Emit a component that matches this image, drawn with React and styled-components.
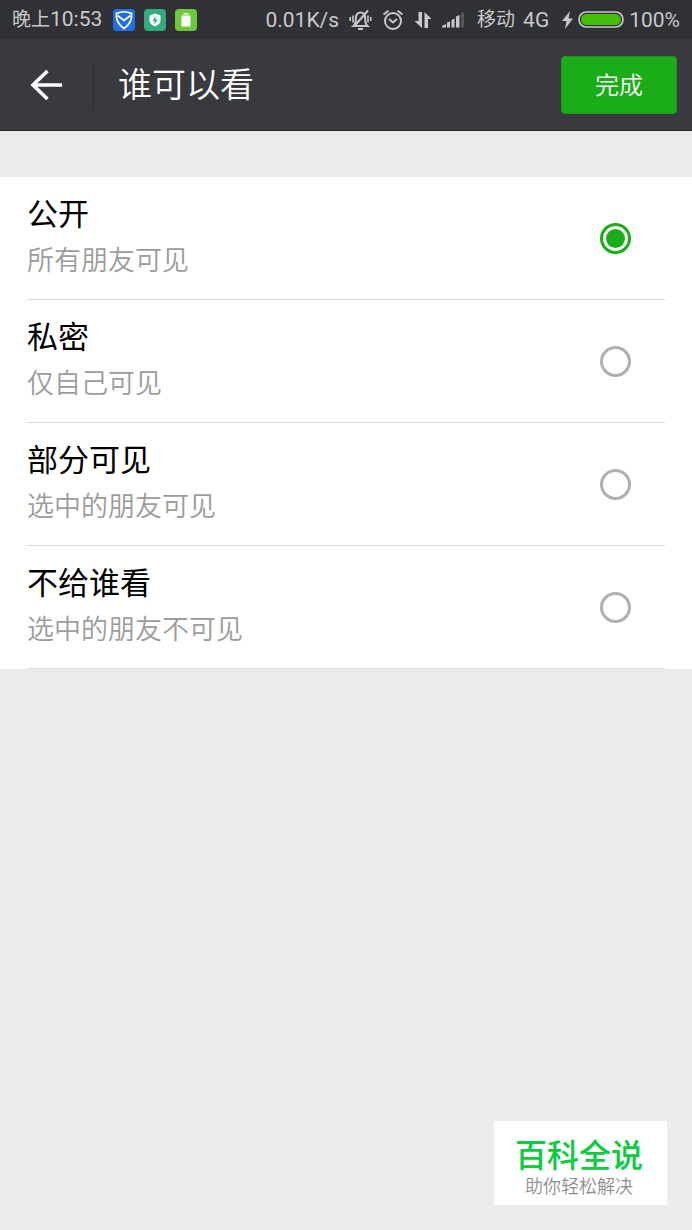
import { useState } from 'react';
import styled, { createGlobalStyle } from 'styled-components';

const GlobalStyle = createGlobalStyle`
  * {
    box-sizing: border-box;
  }

  body {
    margin: 0;
    background: #ebebeb;
    font-family: Roboto, "Noto Sans CJK SC", sans-serif;
  }
`;

const Page = styled.div`
  position: relative;
  min-height: 100vh;
`;

const StatusBar = styled.div`
  display: flex;
  align-items: center;
  justify-content: space-between;
  height: 39px;
  padding: 0 12px;
  background: #303135;
  color: #c9c9cb;
  font-size: 21px;
  line-height: 38px;
  white-space: nowrap;
`;

const StatusGroup = styled.div`
  display: flex;
  align-items: center;
  gap: ${props => props.$gap}px;
`;

const Clock = styled.span`
  padding-right: 2px;
`;

const Chinese = styled.span`
  font-size: 19px;
`;

const AppBadge = styled.svg`
  width: 22px;
  height: 22px;
  border-radius: 4px;
  background: ${props => props.$color};
`;

const Carrier = styled.span`
  display: flex;
  gap: 8px;
  padding: 0 3px 0 2px;
`;

const Power = styled.span`
  display: flex;
  align-items: center;
  gap: 5px;
`;

const Header = styled.header`
  display: flex;
  align-items: center;
  height: 92px;
  padding: 0 15px 0 0;
  background: #393a3f;
  border-bottom: 1px solid #2c2d31;
`;

const BackButton = styled.button`
  display: flex;
  align-items: center;
  justify-content: center;
  width: 94px;
  height: 48px;
  padding: 0;
  border: none;
  border-right: 2px solid #323337;
  background: none;
  color: #ffffff;
  cursor: pointer;
`;

const Title = styled.h1`
  flex: 1;
  margin: 0;
  padding-left: 24px;
  color: #ffffff;
  font-size: 34px;
  font-weight: 350;
  line-height: 48px;
`;

const DoneButton = styled.button`
  width: 116px;
  height: 58px;
  padding: 0 0 2px;
  border: 1px solid #179e16;
  border-radius: 4px;
  background: #1aad19;
  color: #ffffff;
  font-family: inherit;
  font-size: 24px;
  font-weight: 350;
  cursor: pointer;
`;

const Options = styled.main`
  margin-top: 46px;
  padding: 0 27px;
  background: #ffffff;
`;

const Option = styled.label`
  display: flex;
  align-items: center;
  justify-content: space-between;
  height: 123px;
  padding: 0 34px 0 0;
  border-bottom: 1px solid #dedede;
  cursor: pointer;
`;

const OptionName = styled.div`
  color: #000000;
  font-size: 31px;
  line-height: 46px;
`;

const OptionHint = styled.div`
  color: #9c9c9c;
  font-size: 27px;
  font-weight: 350;
  line-height: 46px;
`;

const Radio = styled.input`
  appearance: none;
  width: 31px;
  height: 31px;
  margin: 0;
  border: 3px solid #b0b0b0;
  border-radius: 50%;
  background: #ffffff;
  cursor: pointer;

  &:checked {
    padding: 3px;
    border-color: #1aad19;
    background: #1aad19 content-box;
  }
`;

const Watermark = styled.aside`
  position: absolute;
  right: 25px;
  bottom: 25px;
  padding: 15px 24px 7px 21px;
  background: #ffffff;
  text-align: center;
`;

const Brand = styled.div`
  color: #0bcb3f;
  font-size: 32px;
  font-weight: 500;
  line-height: 40px;
`;

const Slogan = styled.div`
  color: #8e8e8e;
  font-size: 18px;
  font-weight: 350;
  line-height: 22px;
`;

const options = [
  { id: 'public', name: '公开', hint: '所有朋友可见' },
  { id: 'private', name: '私密', hint: '仅自己可见' },
  { id: 'partial', name: '部分可见', hint: '选中的朋友可见' },
  { id: 'exclude', name: '不给谁看', hint: '选中的朋友不可见' }
];

const MutedBell = () => (
  <svg width="23" height="22" viewBox="0 0 23 22" fill="none" stroke="currentColor" strokeWidth="2">
    <path d="M4.500 17c1.800-1.500 2.300-3 2.300-7 0-4.200 1.700-6.500 4.700-6.500s4.700 2.300 4.700 6.500c0 4 .5 5.500 2.300 7zM9 20h5" />
    <path d="M19 1.500 5 17.500" />
    <path d="M4 6.500v7M1.200 8v4M19 6.500v7M21.800 8v4" strokeWidth="1.600" />
  </svg>
);

const AlarmClock = () => (
  <svg width="22" height="22" viewBox="0 0 22 22" fill="none" stroke="currentColor" strokeWidth="2">
    <circle cx="11" cy="12" r="8" />
    <path d="m7 10 4 3.500 4-3.500M1.500 5.500 6.500 1.800M20.500 5.500 15.500 1.800" />
  </svg>
);

const DataArrows = () => (
  <svg width="18" height="18" viewBox="0 0 18 18" fill="currentColor">
    <path d="M4.500 1h3.500v16L.5 10h4zM10.500 1l7 7h-3.500v9h-3.500z" />
  </svg>
);

const Signal = () => (
  <svg width="23" height="16" viewBox="0 0 23 16" fill="currentColor">
    <path d="M0 15.500V14l4-2v3.500zM5 10.500l3-1v6H5zM9.500 8l3-1.500v9h-3zM14 4.500 17.500 3v12.500H14z" />
    <path d="M19 1.500 22 0v15.500h-3z" fill="#55565a" />
  </svg>
);

const Bolt = () => (
  <svg width="11" height="18" viewBox="0 0 11 18" fill="currentColor">
    <path d="M8 0 0 10h4.500L3 18l8-10.500H6.500z" />
  </svg>
);

const Battery = () => (
  <svg width="46" height="17" viewBox="0 0 46 17">
    <rect x="1" y="1" width="44" height="15" rx="7.500" fill="none" stroke="#c9c9cb" strokeWidth="1.700" />
    <rect x="3" y="3" width="40" height="11" rx="5.500" fill="#43bf06" />
  </svg>
);

export default function App() {
  const [selected, setSelected] = useState('public');

  return (
    <Page>
      <GlobalStyle />

      <StatusBar>
        <StatusGroup $gap={9}>
          <Clock><Chinese>晚上</Chinese>10:53</Clock>
          <AppBadge $color="#216fe8" viewBox="0 0 22 22" fill="none" stroke="#ffffff" strokeWidth="1.700">
            <path d="M3.500 4.500Q11 1 18.500 4.500c.8 6-2.500 11.500-7.500 15C6 16 2.700 10.500 3.500 4.500z" />
            <path d="m4.500 6.500 6.500 5 6.500-5" />
          </AppBadge>
          <AppBadge $color="#31ad7d" viewBox="0 0 22 22">
            <path d="m11 4.500 5.500 2v5c0 3-2.500 4.500-5.500 6-3-1.500-5.500-3-5.500-6v-5z" fill="#ffffff" />
            <path d="M11.500 7 8.500 12h2v3.500l3-5h-2z" fill="#31ad7d" />
          </AppBadge>
          <AppBadge $color="#70c73a" viewBox="0 0 22 22" fill="#ffffff">
            <path d="M8.500 4h5v1.500h-5zM6.500 6.500h9v11h-9z" />
          </AppBadge>
        </StatusGroup>

        <StatusGroup $gap={10}>
          <span>0.01K/s</span>
          <MutedBell />
          <AlarmClock />
          <DataArrows />
          <Signal />
          <Carrier><Chinese>移动</Chinese><span>4G</span></Carrier>
          <Power>
            <Bolt />
            <Battery />
            <span>100%</span>
          </Power>
        </StatusGroup>
      </StatusBar>

      <Header>
        <BackButton aria-label="返回">
          <svg width="32" height="32" viewBox="0 0 32 32" fill="none" stroke="currentColor" strokeWidth="3.600">
            <path d="M17.500 2 3 16l14.500 14M3 16h29" />
          </svg>
        </BackButton>
        <Title>谁可以看</Title>
        <DoneButton>完成</DoneButton>
      </Header>

      <Options>
        {options.map(option => (
          <Option key={option.id}>
            <div>
              <OptionName>{option.name}</OptionName>
              <OptionHint>{option.hint}</OptionHint>
            </div>
            <Radio
              type="radio"
              name="visibility"
              value={option.id}
              checked={selected === option.id}
              onChange={() => setSelected(option.id)}
            />
          </Option>
        ))}
      </Options>

      <Watermark>
        <Brand>百科全说</Brand>
        <Slogan>助你轻松解决</Slogan>
      </Watermark>
    </Page>
  );
}
